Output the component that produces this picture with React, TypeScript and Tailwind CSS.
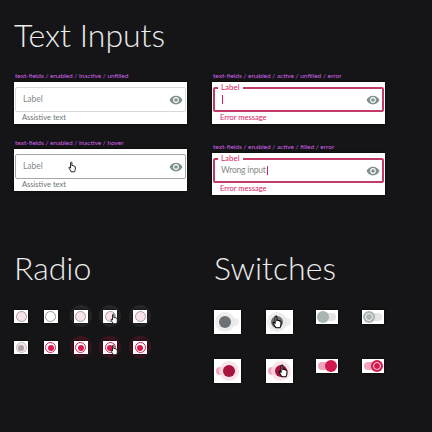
import type { ReactNode } from 'react';

const eye = 'M12 4.5C7 4.5 2.73 7.61 1 12c1.73 4.39 6 7.5 11 7.5s9.27-3.11 11-7.5c-1.73-4.39-6-7.5-11-7.5zM12 17c-2.76 0-5-2.24-5-5s2.24-5 5-5 5 2.24 5 5-2.24 5-5 5zm0-8c-1.66 0-3 1.34-3 3s1.34 3 3 3 3-1.34 3-3-1.34-3-3-3z';

const EyeIcon = () => (
    <svg viewBox="0 0 24 24" className="h-[14px] w-[14px] shrink-0 fill-[#7f908e]">
        <path d={eye} />
    </svg>
);

const HandCursor = ({ className }: { className: string }) => (
    <svg viewBox="0 0 16 20" className={className}>
        <path
            d="M5 1.500c.8-.6 2-.2 2 .9V8l.4-.6c1-.4 1.600 0 1.800.6 1-.5 1.700 0 1.900.7 1-.4 1.900.1 1.900 1.100v4c0 2.200-1 3.200-1.400 4.700H5.500C4.800 16.500 2.500 13.500 1.600 11.800c-.5-1 .6-1.900 1.500-1.200L4.500 12V2.500c0-.4.200-.8.500-1z"
            fill="#fff"
            stroke="#000"
            strokeWidth="1.500"
            strokeLinejoin="round"
        />
    </svg>
);

const Heading = ({ children }: { children: ReactNode }) => (
    <h2 className="text-[32px] leading-[44px] font-light text-[#ececec]">{children}</h2>
);

const TextField = ({
    title,
    status,
    helper,
    error,
    value,
    hover,
    filled,
}: {
    title: string;
    status: 'idle' | 'hover' | 'error';
    helper: string;
    error?: boolean;
    value?: string;
    hover?: boolean;
    filled?: boolean;
}) => {
    const border = status === 'error' ? 'border-2 border-[#c23a66]' : status === 'hover' ? 'border border-[#a3a8a8]' : 'border border-[#d5dbda]';
    return (
        <div className="w-[173px]">
            <div className="h-[12px] pl-px text-[6.500px] leading-[12px] text-[#d060e8]">{title}</div>
            <div className="flex h-[42px] flex-col bg-white px-px pt-[5px] shadow-[0_0_2px_#000]">
                <div className={`relative flex h-[25px] items-center justify-between rounded-[2px] pr-[2px] ${error ? 'pl-[6px]' : 'pl-[7px]'} ${border}`}>
                    {error && <span className="absolute top-[-6px] left-[3px] bg-white px-[3px] text-[8px] leading-[8px] text-[#d81b60]">Label</span>}
                    {error ? (
                        <span className="flex items-center text-[8.500px] tracking-[-0.2px] text-[#868a8a]">
                            {filled && value}
                            <span className="ml-px h-[9px] w-px bg-[#d81b60]" />
                        </span>
                    ) : (
                        <span className="text-[8.500px] text-[#858c8b]">Label</span>
                    )}
                    {hover && <HandCursor className="absolute top-[6px] left-[52px] h-[12px] w-[9px]" />}
                    <EyeIcon />
                </div>
                <div className={`pl-[7px] text-[7.500px] leading-[11px] ${error ? 'text-[#d81b60]' : 'text-[#6d7473]'}`}>{helper}</div>
            </div>
        </div>
    );
};

const Radio = ({ kind, halo, hand, plain }: { kind: 'off' | 'on' | 'offDisabled'; halo?: boolean; hand?: boolean; plain?: boolean }) => {
    let ring = 'border border-[#a89da0]';
    if (kind === 'on') ring = 'border-[1.500px] border-[#d81b4f]';
    else if (kind === 'offDisabled') ring = 'border border-[#c4b8bb]';
    else if (plain) ring = 'border-[1.500px] border-[#a09598]';
    let fill = 'bg-white';
    if (kind === 'off' && !plain) fill = 'bg-[#f8e4ea]';
    else if (kind === 'offDisabled') fill = 'bg-[#f3e6e9]';
    return (
        <div className="relative h-[13px] w-[14px]">
            {halo && <span className={`absolute top-[-5px] left-[-4px] h-[22px] w-[22px] rounded-full ${kind === 'on' ? 'bg-[#3a1520]' : 'bg-[#262628]'}`} />}
            <div className="relative flex h-[13px] w-[14px] items-center justify-center bg-white shadow-[0_0_2px_#000]">
                <span className={`flex h-[11px] w-[11px] items-center justify-center rounded-full ${ring} ${fill}`}>
                    {kind === 'on' && <span className="h-[6px] w-[6px] rounded-full bg-[#d81b4f]" />}
                    {kind === 'offDisabled' && <span className="h-[6px] w-[6px] rounded-full bg-[#ad9fa3]" />}
                </span>
            </div>
            {hand && <HandCursor className="absolute top-[3px] left-[7px] h-[12px] w-[9px]" />}
        </div>
    );
};

const SwitchBig = ({ on, hand }: { on?: boolean; hand?: boolean }) => (
    <div className="relative h-[24px] w-[27px] bg-white shadow-[0_0_2px_#000]">
        <span className={`absolute top-[8px] h-[8px] w-[20px] rounded-full ${on ? 'left-[2px] bg-[#eda6bc]' : 'left-[5px] bg-[#eeeeee]'}`} />
        <span className={`absolute top-[2px] h-[20px] w-[20px] rounded-full ${on ? 'left-[5px] bg-[#f9dde5]/80' : 'left-px bg-[#e9e9e9]/80'}`} />
        <span className={`absolute top-[6px] h-[12px] w-[12px] rounded-full ${on ? 'left-[9px] bg-[#a8123f]' : 'left-[5px] bg-[#6f7274]'}`} />
        {hand && <HandCursor className={`absolute top-[5px] h-[14px] w-[11px] ${on ? 'left-[12px]' : 'left-[6px]'}`} />}
    </div>
);

const SwitchSmall = ({ on, focus }: { on?: boolean; focus?: boolean }) => (
    <div className="relative h-[14px] w-[22px] bg-white shadow-[0_0_2px_#000]">
        <span className={`absolute top-[3px] h-[8px] w-[17px] rounded-full ${on ? 'left-[2px] bg-[#f0a5bc]' : 'left-[3px] bg-[#e4e4e4]'}`} />
        <span
            className={`absolute top-px h-[12px] w-[12px] rounded-full ${on ? 'left-[9px] bg-[#d2194f]' : 'left-px bg-[#a9b5b3]'} ${focus ? 'flex items-center justify-center' : ''}`}
        >
            {focus && <span className="h-[8px] w-[8px] rounded-full border border-white/80" />}
        </span>
    </div>
);

export default function App() {
    return (
        <div className="h-[432px] w-[432px] overflow-hidden bg-[#151517] pt-[13px] pl-[14px] font-['Lato',sans-serif]">
            <Heading>Text Inputs</Heading>
            <div className="mt-[13px] flex gap-[25px]">
                <div className="flex flex-col gap-[13px]">
                    <TextField title="text-fields / enabled / inactive / unfilled" status="idle" helper="Assistive text" />
                    <TextField title="text-fields / enabled / inactive / hover" status="hover" helper="Assistive text" hover />
                </div>
                <div className="flex flex-col gap-[17px]">
                    <TextField title="text-fields / enabled / active / unfilled / error" status="error" helper="Error message" error />
                    <TextField title="text-fields / enabled / active / filled / error" status="error" helper="Error message" error filled value="Wrong input" />
                </div>
            </div>
            <div className="mt-[51px] grid grid-cols-[200px_1fr]">
                <div>
                    <Heading>Radio</Heading>
                    <div className="mt-[20px] grid w-[149px] grid-cols-5 gap-y-[18px]">
                        <Radio kind="off" />
                        <Radio kind="off" plain />
                        <Radio kind="off" halo />
                        <Radio kind="off" halo hand />
                        <Radio kind="off" halo />
                        <Radio kind="offDisabled" />
                        <Radio kind="on" />
                        <Radio kind="on" halo />
                        <Radio kind="on" halo hand />
                        <Radio kind="on" halo />
                    </div>
                </div>
                <div>
                    <Heading>Switches</Heading>
                    <div className="mt-[20px] grid grid-cols-[52px_50px_46px_22px] gap-y-[25px]">
                        <SwitchBig />
                        <SwitchBig hand />
                        <SwitchSmall />
                        <SwitchSmall focus />
                        <SwitchBig on />
                        <SwitchBig on hand />
                        <SwitchSmall on />
                        <SwitchSmall on focus />
                    </div>
                </div>
            </div>
        </div>
    );
}
